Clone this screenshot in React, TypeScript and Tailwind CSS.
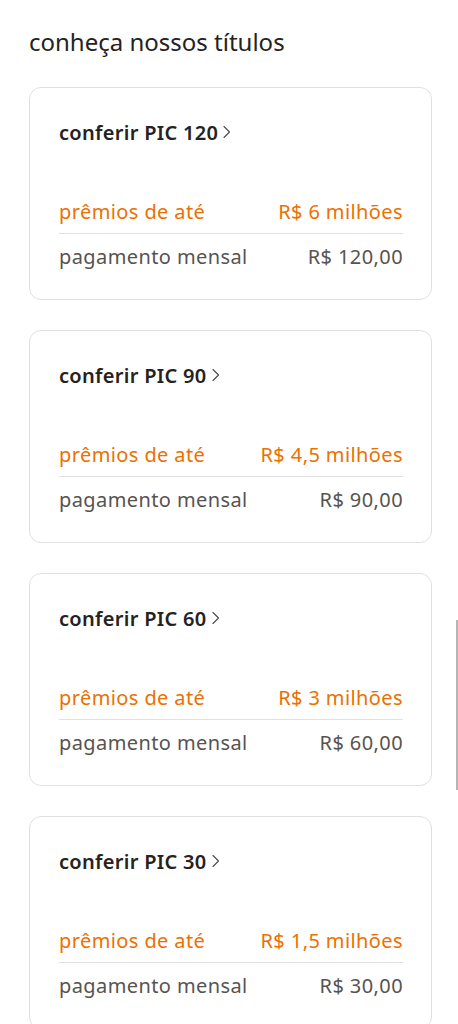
import React from 'react';

interface Titulo {
  name: string;
  premio: string;
  mensal: string;
}

const titulos: Titulo[] = [
  { name: 'PIC 120', premio: 'R$ 6 milhões', mensal: 'R$ 120,00' },
  { name: 'PIC 90', premio: 'R$ 4,5 milhões', mensal: 'R$ 90,00' },
  { name: 'PIC 60', premio: 'R$ 3 milhões', mensal: 'R$ 60,00' },
  { name: 'PIC 30', premio: 'R$ 1,5 milhões', mensal: 'R$ 30,00' },
];

function Chevron() {
  return (
    <svg width="9" height="16" viewBox="0 0 9 16" fill="none" className="ml-[4px] mt-[-3px]">
      <path d="M2 2.5l5.5 5.5L2 13.5" stroke="#4a4a4a" strokeWidth="1.1" strokeLinecap="round" strokeLinejoin="round" />
    </svg>
  );
}

function Card({ t }: { t: Titulo }) {
  return (
    <div className="rounded-[12px] border border-[#e2e0de] bg-white pl-[29px] pr-[28px] pt-[32px] pb-[29px]">
      <div className="flex items-center text-[20px] font-semibold leading-[26px] tracking-[0.3px] text-[#252220]">
        <span>conferir {t.name}</span>
        <Chevron />
      </div>
      <div className="mt-[53px] flex items-center justify-between border-b border-[#e3e1df] pb-[8px] text-[20px] leading-[26px] tracking-[0.4px] text-[#ec7000]">
        <span>prêmios de até</span>
        <span>{t.premio}</span>
      </div>
      <div className="mt-[10px] flex items-center justify-between text-[20px] leading-[26px] tracking-[0.4px] text-[#58534f]">
        <span>pagamento mensal</span>
        <span>{t.mensal}</span>
      </div>
    </div>
  );
}

export default function App() {
  return (
    <div className="relative min-h-[1024px] bg-white font-['Noto_Sans',sans-serif]">
      <div className="pl-[29px] pr-[26px] pt-[26px]">
        <h1 className="text-[24px] leading-[32px] font-normal text-[#252220]">conheça nossos títulos</h1>
        <div className="mt-[29px] flex flex-col gap-[30px]">
          {titulos.map((t) => (
            <Card key={t.name} t={t} />
          ))}
        </div>
      </div>
      <div className="absolute right-0 top-[620px] h-[170px] w-[2px] bg-[#b5b5b5]" />
    </div>
  );
}
